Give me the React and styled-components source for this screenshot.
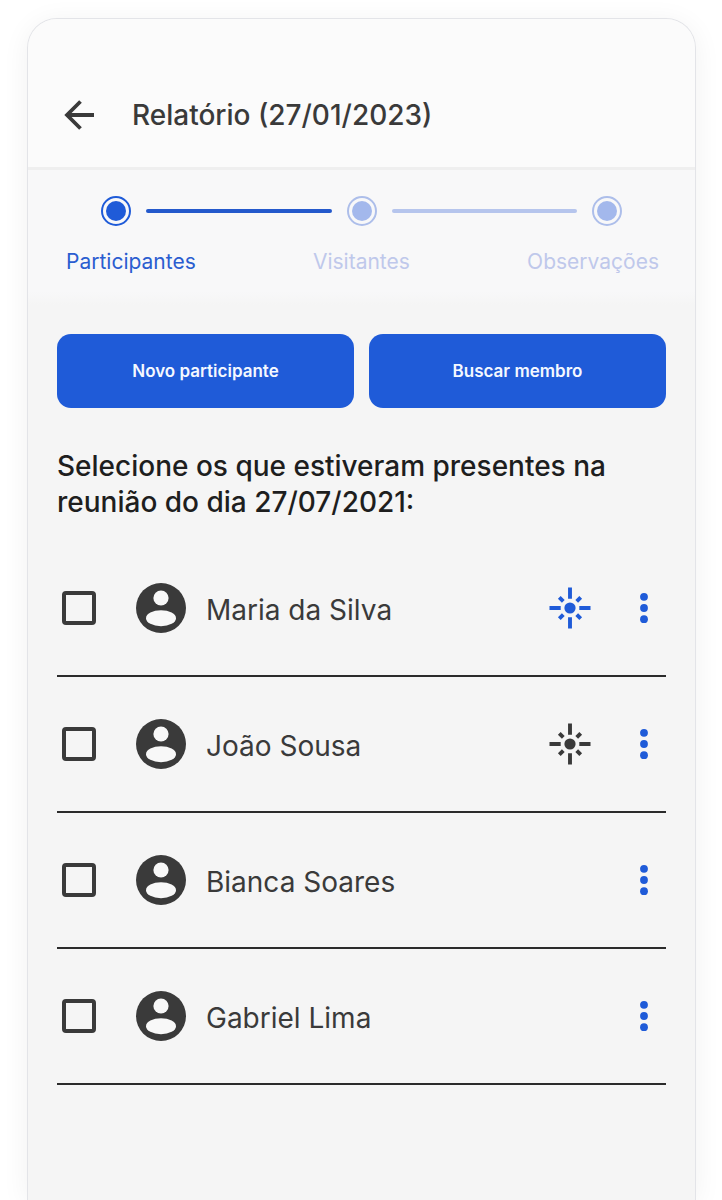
import React from "react";
import styled, { createGlobalStyle } from "styled-components";

const BLUE = "#1f5bd8";
const INK = "#3a3a3a";

const GlobalStyle = createGlobalStyle`
  *, *::before, *::after { box-sizing: border-box; }
  body {
    margin: 0;
    background: #fff;
    font-family: Inter, "Liberation Sans", sans-serif;
  }
  button { font: inherit; border: 0; cursor: pointer; }
  h1, h2, ul, ol { margin: 0; padding: 0; }
  ul, ol { list-style: none; }
`;

const Page = styled.div`
  min-height: 100vh;
  padding: 18px 26px 0 27px;
  overflow: hidden;
`;

const Screen = styled.main`
  min-height: calc(100vh - 18px);
  background: #f5f5f5;
  border: 1px solid #e3e4e8;
  border-bottom: 0;
  border-radius: 30px 30px 0 0;
  box-shadow: 0 4px 28px rgba(0, 0, 0, 0.06);
  overflow: hidden;
`;

const Header = styled.header`
  display: flex;
  align-items: center;
  gap: 34px;
  height: 148px;
  padding: 44px 32px 0;
  background: #fbfbfb;
`;

const BackButton = styled.button`
  display: flex;
  padding: 0;
  background: none;
  color: ${INK};
`;

const Title = styled.h1`
  color: ${INK};
  font-size: 28px;
  line-height: 36px;
  font-weight: 500;
`;

const StepsPanel = styled.nav`
  height: 138px;
  padding-top: 26px;
  background: linear-gradient(#f8f8f9 90%, #f5f5f5);
  border-top: 3px solid #efefef;
`;

const Track = styled.div`
  display: flex;
  align-items: center;
  gap: 15px;
  padding: 0 73px;
`;

const StepDot = styled.span`
  flex: none;
  width: 30px;
  height: 30px;
  padding: 3px;
  border: 2px solid ${(p) => (p.$active ? BLUE : "#adbeea")};
  border-radius: 50%;
  background: ${(p) => (p.$active ? BLUE : "#a3b8ec")} content-box;
`;

const StepLine = styled.span`
  flex: 1;
  height: 4px;
  border-radius: 2px;
  background: ${(p) => (p.$active ? "#2459cc" : "#b6c5ed")};
`;

const StepLabels = styled.ol`
  display: flex;
  justify-content: space-between;
  padding: 21px 36px 0 38px;
`;

const StepLink = styled.a`
  color: ${(p) => (p.$active ? "#2a5dd0" : "#bfc8eb")};
  font-size: 21px;
  line-height: 30px;
  text-decoration: none;
`;

const Content = styled.section`
  padding: 29px 29px 40px;
`;

const Actions = styled.div`
  display: grid;
  grid-template-columns: 1fr 1fr;
  gap: 15px;
`;

const ActionButton = styled.button`
  height: 74px;
  border-radius: 14px;
  background: ${BLUE};
  color: #f4f8ff;
  && {
    font-size: 17px;
    font-weight: 600;
  }
`;

const Prompt = styled.h2`
  margin-top: 40px;
  color: #1e1e1e;
  font-size: 28px;
  line-height: 36px;
  font-weight: 500;
`;

const People = styled.ul`
  margin-top: 21px;
`;

const Person = styled.li`
  display: flex;
  align-items: center;
  height: 136px;
  padding: 0 16px 0 5px;
  border-bottom: 2px solid #2b2b2b;
`;

const PersonLabel = styled.label`
  display: flex;
  flex: 1;
  align-items: center;
  color: ${INK};
  cursor: pointer;
`;

const Name = styled.span`
  padding-top: 4px;
  font-size: 28px;
  line-height: 36px;
`;

const Tick = styled.input`
  appearance: none;
  flex: none;
  width: 34px;
  height: 34px;
  margin: 0 40px 0 0;
  border: 4px solid ${INK};
  border-radius: 4px;
  &:checked { background: ${BLUE}; }
`;

const Avatar = styled.svg`
  flex: none;
  margin-right: 20px;
`;

const IconButton = styled.button`
  display: flex;
  padding: 0;
  background: none;
  color: ${(p) => (p.$dark ? INK : BLUE)};
`;

const RowActions = styled.div`
  display: flex;
  align-items: center;
  gap: 47px;
`;

function BackIcon() {
  return (
    <svg width="38" height="38" viewBox="0 0 38 38" fill="none" stroke="currentColor" strokeWidth="3.8" aria-hidden="true">
      <path d="M34 19H7M20.5 5.5L7 19l13.5 13.5" />
    </svg>
  );
}

function AvatarIcon() {
  return (
    <Avatar width="50" height="50" viewBox="0 0 50 50" aria-hidden="true">
      <circle cx="25" cy="25" r="25" fill={INK} />
      <circle cx="25" cy="15" r="7.6" fill="#f8f8f8" />
      <ellipse cx="25" cy="35.2" rx="15" ry="8" fill="#f8f8f8" />
    </Avatar>
  );
}

function FlareIcon() {
  return (
    <svg width="42" height="42" viewBox="-21 -21 42 42" stroke="currentColor" strokeWidth="3.9" aria-hidden="true">
      <circle r="5.6" fill="currentColor" stroke="none" />
      <path d="M0-20.5V-9.3M0 9.3V20.5M-20.5 0H-9.3M9.3 0H20.5" />
      <path d="M-10.7-10.7l4 4M10.7-10.7l-4 4M-10.7 10.7l4-4M10.7 10.7l-4-4" />
    </svg>
  );
}

function MoreIcon() {
  return (
    <svg width="12" height="32" viewBox="-6 -16 12 32" fill="currentColor" aria-hidden="true">
      <circle cy="-11.2" r="3.9" />
      <circle r="3.9" />
      <circle cy="11.2" r="3.9" />
    </svg>
  );
}

const people = [
  { name: "Maria da Silva", flare: "blue" },
  { name: "João Sousa", flare: "dark" },
  { name: "Bianca Soares" },
  { name: "Gabriel Lima" },
];

export default function App() {
  return (
    <Page>
      <GlobalStyle />
      <Screen>
        <Header>
          <BackButton aria-label="Voltar"><BackIcon /></BackButton>
          <Title>Relatório (27/01/2023)</Title>
        </Header>
        <StepsPanel aria-label="Etapas">
          <Track>
            <StepDot $active />
            <StepLine $active />
            <StepDot />
            <StepLine />
            <StepDot />
          </Track>
          <StepLabels>
            <li><StepLink href="#participantes" $active aria-current="step">Participantes</StepLink></li>
            <li><StepLink href="#visitantes">Visitantes</StepLink></li>
            <li><StepLink href="#observacoes">Observações</StepLink></li>
          </StepLabels>
        </StepsPanel>
        <Content>
          <Actions>
            <ActionButton>Novo participante</ActionButton>
            <ActionButton>Buscar membro</ActionButton>
          </Actions>
          <Prompt>Selecione os que estiveram presentes na reunião do dia 27/07/2021:</Prompt>
          <People>
            {people.map(({ name, flare }) => (
              <Person key={name}>
                <PersonLabel>
                  <Tick type="checkbox" />
                  <AvatarIcon />
                  <Name>{name}</Name>
                </PersonLabel>
                <RowActions>
                  {flare && (
                    <IconButton $dark={flare === "dark"} aria-label={`Destacar ${name}`}><FlareIcon /></IconButton>
                  )}
                  <IconButton aria-label={`Opções de ${name}`}><MoreIcon /></IconButton>
                </RowActions>
              </Person>
            ))}
          </People>
        </Content>
      </Screen>
    </Page>
  );
}
